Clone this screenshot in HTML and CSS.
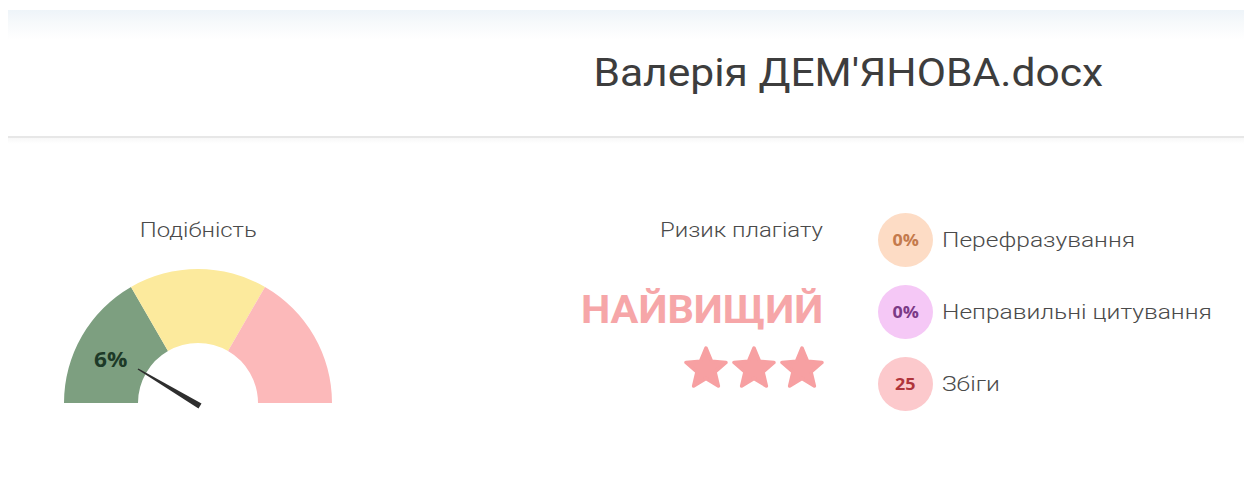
FILE: index.html
```html
<!DOCTYPE html>
<html lang="uk">
<head>
<meta charset="utf-8">
<title>Валерія ДЕМ'ЯНОВА.docx</title>
<link rel="stylesheet" href="styles.css">
</head>
<body>
<div class="page">
  <div class="topbar"></div>
  <header class="doc-header">
    <h1 class="doc-title">Валерія ДЕМ'ЯНОВА.docx</h1>
  </header>
  <div class="divider"></div>

  <section class="stats">
    <div class="similarity">
      <div class="label label-center">Подібність</div>
      <svg class="gauge" width="272" height="144" viewBox="0 0 272 144">
        <path class="seg-low" d="M1 135 A134 134 0 0 1 68 18.95 L105 83.04 A60 60 0 0 0 75 135 Z"/>
        <path class="seg-mid" d="M68 18.95 A134 134 0 0 1 202 18.95 L165 83.04 A60 60 0 0 0 105 83.04 Z"/>
        <path class="seg-high" d="M202 18.95 A134 134 0 0 1 269 135 L195 135 A60 60 0 0 0 165 83.04 Z"/>
        <text class="gauge-value" x="31" y="99">6%</text>
        <polygon class="needle" points="138.5,135.4 135.5,140.6 74.6,101.6 75.4,100.4"/>
      </svg>
    </div>

    <div class="risk">
      <div class="label label-right">Ризик плагіату</div>
      <div class="risk-level">НАЙВИЩИЙ</div>
      <div class="stars">
        <svg class="star" width="44" height="44" viewBox="0 0 44 44"><polygon points="22,2 27.58,15.31 41.97,16.51 31.03,25.94 34.34,39.99 22,32.5 9.66,39.99 12.97,25.94 2.03,16.51 16.42,15.31"/></svg>
        <svg class="star" width="44" height="44" viewBox="0 0 44 44"><polygon points="22,2 27.58,15.31 41.97,16.51 31.03,25.94 34.34,39.99 22,32.5 9.66,39.99 12.97,25.94 2.03,16.51 16.42,15.31"/></svg>
        <svg class="star" width="44" height="44" viewBox="0 0 44 44"><polygon points="22,2 27.58,15.31 41.97,16.51 31.03,25.94 34.34,39.99 22,32.5 9.66,39.99 12.97,25.94 2.03,16.51 16.42,15.31"/></svg>
      </div>
    </div>

    <ul class="breakdown">
      <li class="item"><span class="badge badge-paraphrase"><span class="badge-text">0%</span></span><span class="item-label">Перефразування</span></li>
      <li class="item"><span class="badge badge-citation"><span class="badge-text">0%</span></span><span class="item-label">Неправильні цитування</span></li>
      <li class="item"><span class="badge badge-matches"><span class="badge-text">25</span></span><span class="item-label">Збіги</span></li>
    </ul>
  </section>
</div>
</body>
</html>
```

FILE: styles.css
```css
* {
  box-sizing: border-box;
}

html, body {
  margin: 0;
  padding: 0;
  background: #ffffff;
}

body {
  font-family: Roboto, "Noto Sans", "Liberation Sans", sans-serif;
  color: #444;
}

.page {
  width: 1244px;
  height: 484px;
  overflow: hidden;
}

/* faint shadow band left by the toolbar above */
.topbar {
  margin: 10px 0 0 8px;
  height: 30px;
  background: linear-gradient(to bottom, #eef4f9 0%, #f6f9fb 40%, #ffffff 100%);
}

.doc-header {
  height: 96px;
  display: flex;
  justify-content: flex-end;
  align-items: flex-start;
  padding-right: 141px;
}

.doc-title {
  margin: 11px 0 0;
  font-size: 38px;
  font-weight: 400;
  line-height: 44px;
  color: #3d3d3d;
  transform: scaleX(1.12);
  transform-origin: right center;
}

.divider {
  margin-left: 8px;
  height: 8px;
  border-top: 2px solid #e7e7e7;
  background: linear-gradient(to bottom, #f8f8f8, #ffffff);
}

.stats {
  display: flex;
  align-items: flex-start;
  padding-left: 48px;
  margin-top: 74px;
}

.label {
  font-size: 21px;
  font-weight: 300;
  line-height: 24px;
  color: #4a4a4a;
  transform: scaleX(1.14);
}

.label-center {
  transform-origin: center center;
}

.label-right {
  transform-origin: right center;
}

/* similarity gauge */
.similarity {
  width: 300px;
  display: flex;
  flex-direction: column;
  align-items: center;
}

.gauge {
  display: block;
  margin-top: 26px;
  margin-left: 1px;
}

.seg-low { fill: #7d9f80; }
.seg-mid { fill: #fcea9d; }
.seg-high { fill: #fcb9ba; }

.gauge-value {
  font-family: "Open Sans", Roboto, sans-serif;
  font-size: 21px;
  font-weight: 700;
  fill: #1d3a28;
  transform: scaleX(1.08);
  transform-origin: 31px 99px;
}

.needle {
  fill: #2e2e2e;
}

/* plagiarism risk */
.risk {
  width: 475px;
  display: flex;
  flex-direction: column;
  align-items: flex-end;
}

.risk-level {
  margin-top: 46px;
  font-size: 38px;
  font-weight: 700;
  line-height: 44px;
  color: #f6a6a8;
  transform: scaleX(1.09);
  transform-origin: right center;
}

.stars {
  display: flex;
  gap: 4px;
  margin-top: 14px;
  margin-right: -1px;
}

.star {
  display: block;
}

.star polygon {
  fill: #f7a0a2;
  stroke: #f7a0a2;
  stroke-width: 3.5;
  stroke-linejoin: round;
}

/* breakdown list */
.breakdown {
  list-style: none;
  margin: -5px 0 0 55px;
  padding: 0;
  display: flex;
  flex-direction: column;
  gap: 18px;
}

.item {
  display: flex;
  align-items: center;
  gap: 9px;
}

.badge {
  width: 55px;
  height: 54px;
  border-radius: 50%;
  display: flex;
  align-items: center;
  justify-content: center;
  font-family: "Open Sans", Roboto, sans-serif;
  font-size: 16px;
  font-weight: 700;
}

.badge-text {
  transform: scaleX(1.12);
}

.badge-paraphrase {
  background: #fddcc5;
  color: #c47a4c;
}

.badge-citation {
  background: #f5c8f6;
  color: #7b3a86;
}

.badge-matches {
  background: #fcc9cc;
  color: #b0343b;
}

.item-label {
  font-size: 21px;
  font-weight: 300;
  line-height: 24px;
  color: #4a4a4a;
  transform: scaleX(1.17);
  transform-origin: left center;
}
```
